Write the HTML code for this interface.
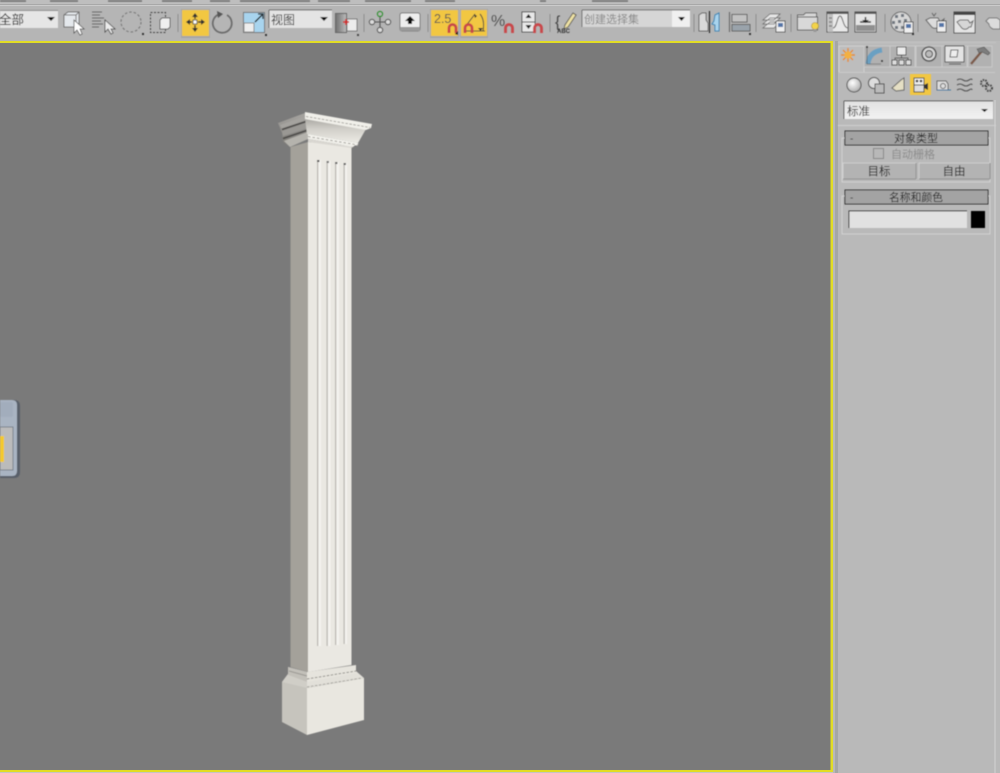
<!DOCTYPE html>
<html lang="zh">
<head>
<meta charset="utf-8">
<title>3ds Max</title>
<style>
html,body{margin:0;padding:0;background:#b5b5b5}
body{width:1000px;height:773px;overflow:hidden;position:relative}
svg{position:absolute;left:0;top:0;display:block}
text{font-family:"Liberation Sans","Noto Sans CJK SC",sans-serif}
</style>
</head>
<body>
<svg width="1000" height="773" viewBox="0 0 1000 773" xmlns="http://www.w3.org/2000/svg">
<defs>
<linearGradient id="fld" x1="0" y1="0" x2="0" y2="1"><stop offset="0" stop-color="#e2e2e2"/><stop offset="1" stop-color="#f2f2f2"/></linearGradient>
<linearGradient id="crown" x1="0" y1="0" x2="0" y2="1"><stop offset="0" stop-color="#a8a6a1"/><stop offset=".45" stop-color="#d2d0ca"/><stop offset="1" stop-color="#ecebe5"/></linearGradient>
<linearGradient id="band" x1="0" y1="0" x2="0" y2="1"><stop offset="0" stop-color="#a7a5a1"/><stop offset="1" stop-color="#7c7a76"/></linearGradient>
<radialGradient id="sph" cx=".4" cy=".35" r=".7"><stop offset="0" stop-color="#fff"/><stop offset="1" stop-color="#aaa"/></radialGradient>
<linearGradient id="piv" x1="0" y1="0" x2="1" y2="0"><stop offset="0" stop-color="#6f6f6f"/><stop offset="1" stop-color="#bdbdbd"/></linearGradient>
<filter id="b"><feGaussianBlur stdDeviation=".45"/></filter>
<filter id="b2"><feGaussianBlur stdDeviation=".7"/></filter>
</defs>

<rect width="1000" height="773" fill="#b5b5b5"/>
<rect x="0" y="0" width="1000" height="4" fill="#bebebe"/>
<g fill="#7d7d7d" filter="url(#b)">
<rect x="0" y="0" width="26" height="2"/><rect x="50" y="0" width="28" height="2"/><rect x="108" y="0" width="34" height="2"/><rect x="162" y="0" width="30" height="2"/><rect x="210" y="0" width="20" height="2"/><rect x="240" y="0" width="70" height="2"/><rect x="318" y="0" width="32" height="2"/><rect x="365" y="0" width="46" height="2"/><rect x="425" y="0" width="30" height="2"/><rect x="540" y="0" width="6" height="2"/><rect x="592" y="0" width="36" height="2"/>
</g>
<rect x="0" y="4" width="1000" height="1" fill="#a8a8a8"/>
<rect x="0" y="5" width="1000" height="1" fill="#cbcbcb"/>

<!-- viewport -->
<rect x="0" y="41" width="833" height="732" fill="#e2dd24"/>
<rect x="0" y="43" width="830.500" height="727" fill="#7a7a7a"/>
<rect x="833" y="41" width="167" height="732" fill="#b9b9b9"/>
<rect x="835" y="41" width="3" height="732" fill="#a5a7a5"/>
<rect x="994" y="100" width="2" height="673" fill="#c6c6c6"/>
<rect x="0" y="772" width="833" height="1" fill="#c5c5c5"/>

<g filter="url(#b)">
<rect x="0" y="10" width="58" height="18" fill="#e6e6e6"/>
<rect x="0" y="10" width="58" height="1" fill="#8a8a8a"/>
<path d="M47 17h8l-4 4z" fill="#111"/>
<text x="-1" y="24" font-size="12.500" fill="#222">全部</text>

<!-- select object -->
<path d="M64 15l4-3h11v12l-3 3H64z" fill="#e4e8ec" stroke="#6f6f6f"/>
<path d="M64 15h12v12M76 15l3-3" fill="none" stroke="#777"/>
<path d="M74 20v13l3-3 3 5 2-1-2-5h4z" fill="#fff" stroke="#555" stroke-width=".8"/>

<!-- select by name -->
<path d="M92 12h10M92 15h8M92 18h12M92 21h9M92 24h11M92 27h7" stroke="#6a6a6a" stroke-width="1"/>
<path d="M105 20v12l3-3 3 5 2-1-2-4h4z" fill="#ececec" stroke="#444" stroke-width=".8"/>

<circle cx="131" cy="22" r="10" fill="none" stroke="#777" stroke-width="1.100" stroke-dasharray="2.500 2"/>
<rect x="142" y="33" width="2" height="2" fill="#333"/>

<rect x="150.500" y="12.500" width="15" height="20" fill="none" stroke="#444" stroke-dasharray="2 1.500"/>
<path d="M160 20l2-2h8v9l-2 2h-8z" fill="#efefef" stroke="#666"/>
<path d="M178 14v18" stroke="#8e8e8e"/>

<!-- move active -->
<rect x="181" y="9" width="29" height="29" fill="#a4a4a4"/>
<rect x="182" y="10" width="27" height="26" fill="#f2c743"/>
<rect x="193" y="20" width="4" height="4" fill="#fff" stroke="#333" stroke-width=".8"/>
<path d="M195 13l3 4h-6zM195 32l-3-4h6zM186 22l4-3v6zM205 22l-4-3v6z" fill="#333"/>
<path d="M195 17v2M195 25v3M190 22h2M198 22h3" stroke="#333" stroke-width="1.400"/>

<!-- rotate -->
<path d="M220 14a9.500 9.500 0 1 0 7 1" fill="none" stroke="#6b6b6b" stroke-width="1.700"/>
<path d="M217 11l6 3-5 4z" fill="#555"/>

<!-- scale -->
<rect x="243.500" y="12.500" width="21" height="20" fill="#a8d4ee" stroke="#777"/>
<rect x="244" y="23" width="10" height="9" fill="#eee" stroke="#888"/>
<path d="M255 22l7-7M258 14h5v5" stroke="#111" stroke-width="1.300" fill="none"/>
<rect x="265" y="34" width="2" height="2" fill="#333"/>

<rect x="269" y="10" width="63" height="18" fill="#e4e4e4"/>
<path d="M269 10h63M269 10v18" stroke="#666" fill="none"/>
<path d="M320 17h8l-4 4z" fill="#111"/>
<text x="271" y="24" font-size="12" fill="#333">视图</text>

<!-- pivot -->
<rect x="335.500" y="13.500" width="11" height="19" fill="url(#piv)" stroke="#666"/>
<rect x="347" y="19" width="10" height="12" fill="#ececec" stroke="#777"/>
<path d="M346 19v6M343 22h6" stroke="#d32020" stroke-width="1.500"/>
<rect x="357" y="34" width="2" height="2" fill="#444"/>
<path d="M364 14v18" stroke="#8e8e8e"/>

<g fill="none" stroke="#555" stroke-width="1.100">
<path d="M380 17v13M373 22h14"/>
<circle cx="380" cy="14" r="2.600" stroke="#2d8f2d"/>
<circle cx="372" cy="22" r="2.600" fill="#ddd"/>
<circle cx="388" cy="22" r="2.600" fill="#ddd"/>
<circle cx="380" cy="30" r="2.600" fill="#ddd"/>
</g>
<rect x="400" y="13" width="20" height="18" rx="2" fill="#ededed" stroke="#777"/>
<rect x="400" y="27" width="20" height="4" rx="1" fill="#999"/>
<path d="M410 16l5 5h-3v3h-4v-3h-3z" fill="#111"/>
<path d="M428 14v18" stroke="#8e8e8e"/>

<!-- snaps -->
<rect x="430" y="9" width="29" height="29" fill="#a5a5a5"/>
<rect x="431" y="10" width="27" height="26" fill="#f2c743"/>
<text x="434" y="23" font-size="12.500" fill="#555">2.5</text>
<rect x="460" y="9" width="28" height="29" fill="#a5a5a5"/>
<rect x="461" y="10" width="26" height="26" fill="#f2c743"/>
<path d="M465 27l10-13M466 31h19M480 14q5 6 3 17" fill="none" stroke="#444"/>
<path d="M478 28h5l-2.500 3z" fill="#333"/>
<path d="M474 14l3 2-2 2z" fill="#333"/>
<text x="491" y="26" font-size="16" fill="#555">%</text>
<path d="M522 12h13v20h-13z" fill="#e8e8e8" stroke="#555"/>
<path d="M522 22h13" stroke="#444"/>
<path d="M528.500 14l3 4h-6zM528.500 29l-3-4h6z" fill="#222"/>
<g fill="none" stroke="#c9474a" stroke-width="2.800">
<path d="M449 33v-5a3.500 3.500 0 0 1 7 0v5"/>
<path d="M465 33v-5a3.500 3.500 0 0 1 7 0v5"/>
<path d="M505.500 33v-5a3.500 3.500 0 0 1 7 0v5"/>
<path d="M534.500 33v-5a3.500 3.500 0 0 1 7 0v5"/>
</g>
<path d="M458 35l-3-1 3-3z" fill="#111"/>
<path d="M550 14v18" stroke="#8e8e8e"/>

<!-- named sets -->
<text x="555" y="27" font-size="16" fill="#444">{</text>
<path d="M565 25l8-12 3 2-8 12-4 2z" fill="#efe2a4" stroke="#444" stroke-width=".8"/>
<text x="557" y="33" font-size="6" fill="#333" font-weight="bold">ABC</text>
<rect x="582" y="10" width="108" height="17" fill="#d6d6d6"/>
<rect x="672" y="10" width="18" height="17" fill="#f0f0f0"/>
<path d="M582 10h108M582 10v17" stroke="#6d6d6d" fill="none"/>
<path d="M678 17h7l-3.500 4z" fill="#111"/>
<text x="584" y="23" font-size="11" fill="#888">创建选择集</text>
<path d="M694 14v18" stroke="#8e8e8e"/>

<!-- mirror -->
<path d="M699 15l3-2h4v7l2 3v8h-9z" fill="#d9d9d9" stroke="#666"/>
<path d="M709.500 11v22" stroke="#222" stroke-width="1.100"/>
<path d="M719 13l-4 2-1 6-2 3 3 1v6h4z" fill="#a8d4ee" stroke="#3f85b5"/>
<!-- align -->
<path d="M729.500 12v20" stroke="#666" stroke-width="1.100"/>
<rect x="732" y="14.500" width="15" height="7.500" fill="#c2c2c2" stroke="#666"/>
<rect x="732" y="24.500" width="18" height="6.500" fill="#9aa3ab" stroke="#666"/>
<rect x="749" y="33" width="2" height="2" fill="#333"/>
<path d="M756 14v18" stroke="#8e8e8e"/>

<!-- layers -->
<path d="M763 24l7-6h10l-6 6zM763 20l7-6h10l-6 6zM763 28l7-6h10l-6 6z" fill="#e6e6e6" stroke="#666" stroke-width=".8"/>
<rect x="776" y="21" width="9" height="11" fill="#efefef" stroke="#444" stroke-width=".8"/>
<rect x="778" y="23" width="5" height="4" fill="#5274a8"/>
<path d="M791 14v18" stroke="#8e8e8e"/>

<!-- scene explorer -->
<path d="M797.500 15h6l2-2h11v4h1v13h-20z" fill="#d8d8d8" stroke="#666"/>
<path d="M798 17h19" stroke="#555"/>
<circle cx="815" cy="26" r="3.500" fill="#f2d34b" stroke="#a68d20" stroke-width=".6"/>
<rect x="813.500" y="29" width="3" height="3" fill="#999"/>
<!-- curve editor -->
<rect x="827" y="12" width="21" height="20" fill="#e9e9e9" stroke="#555"/>
<rect x="827" y="12" width="21" height="2" fill="#555"/>
<rect x="828" y="14" width="5" height="18" fill="#bfbfbf"/>
<path d="M829 18h3M829 22h3M829 26h3" stroke="#666"/>
<path d="M833 28c4 0 4-12 7-12s3 12 8 12" fill="none" stroke="#666"/>
<!-- schematic / dope -->
<rect x="855" y="12" width="21" height="20" fill="#e5e5e5" stroke="#555"/>
<rect x="855" y="12" width="21" height="2" fill="#555"/>
<rect x="856" y="25" width="19" height="6" fill="#8f8f8f"/>
<path d="M860 22h11" stroke="#222" stroke-width="1.400"/>
<path d="M865.500 17v4" stroke="#222" stroke-width="1.400"/>
<path d="M862 20h7l-3.500 3z" fill="#222"/>
<path d="M885 14v18" stroke="#8e8e8e"/>

<!-- material -->
<circle cx="901" cy="22" r="10" fill="#d6d6d6" stroke="#666"/>
<g fill="#6f7780"><rect x="895" y="15" width="3" height="3"/><rect x="901" y="14" width="3" height="3"/><rect x="892" y="21" width="3" height="3"/><rect x="898" y="20" width="3" height="3"/><rect x="904" y="19" width="3" height="3"/><rect x="895" y="26" width="3" height="3"/><rect x="901" y="26" width="3" height="3"/></g>
<rect x="904" y="22" width="9" height="11" fill="#efefef" stroke="#444" stroke-width=".8"/>
<rect x="906" y="24" width="5" height="4" fill="#5274a8"/>
<rect x="912" y="33" width="2" height="2" fill="#333"/>
<path d="M918 14v18" stroke="#8e8e8e"/>

<!-- render setup teapot -->
<path d="M930 18h8l2 4 4-3-2 7h-3c-2 3-6 3-8 0l-5-6z" fill="#dcdcdc" stroke="#666"/>
<path d="M932 13l2 3 2-3" stroke="#666" fill="none"/>
<rect x="937" y="21" width="9" height="11" fill="#efefef" stroke="#444" stroke-width=".8"/>
<rect x="939" y="23" width="5" height="4" fill="#5274a8"/>
<!-- rendered frame -->
<rect x="954" y="12" width="21" height="21" fill="#e4e4e4" stroke="#555"/>
<rect x="954" y="12" width="21" height="3" fill="#444"/>
<path d="M960 20h8l2 3 3-2-2 6h-2c-2 3-6 3-8 0l-4-5z" fill="#d6d6d6" stroke="#666"/>
<!-- render -->
<path d="M989 18h8l3 2v9h-7c-2-1-4-3-4-5l-3-3z" fill="#dcdcdc" stroke="#777"/>
</g>

<!-- left floating panel -->
<g filter="url(#b)">
<path d="M0 400h14q6 0 6 6v66q0 6-6 6H0z" fill="#585f69"/>
<path d="M0 400h12q5 0 5 5v66q0 5-5 5H0z" fill="#a9b4c2"/>
<rect x="0" y="402" width="13" height="15" rx="2" fill="#a2adbc"/>
<rect x="0" y="427" width="13" height="43" fill="#bbb"/>
<rect x="0" y="427" width="13" height="43" fill="none" stroke="#7b838d"/>
<rect x="0" y="436" width="4" height="26" fill="#f3c92f"/>
</g>

<!-- column -->
<g filter="url(#b)">
<polygon points="282,682 307,688 307,735 282,722" fill="#c6c4bd"/>
<polygon points="307,688 364,678 364,720 307,735" fill="#e9e7e0"/>
<polygon points="282,682 288,674 307,680 356,671 364,678 307,688" fill="#e2e0d9"/>
<polygon points="282,682 288,674 307,680 307,688" fill="#d0cec7"/>
<polygon points="288,667 307,672 356,665 356,673 307,682 288,675" fill="#e6e4dd"/>
<polygon points="288,667 307,672 307,682 288,675" fill="#c2c0b9"/>
<path d="M307 679l49-8" stroke="#8a8883" stroke-width=".9" stroke-dasharray="2.500 1.500"/>
<path d="M289 671l18 5" stroke="#9a9893" stroke-width="1"/>
<path d="M307 687l55-9" stroke="#a3a19b" stroke-width=".9" stroke-dasharray="2.500 1.500"/>
<!-- shaft -->
<polygon points="290.500,147 308,142 308,672 290.500,667" fill="#a4a19a"/>
<polygon points="308,142 351.500,146 351.500,665 308,672" fill="#eae8e2"/>
<g>
<rect x="317" y="160" width="4" height="486" fill="#f4f3ef"/><rect x="317" y="160" width="1.300" height="486" fill="#b9b7b1"/>
<rect x="326.500" y="161" width="4" height="485" fill="#f4f3ef"/><rect x="326.500" y="161" width="1.300" height="485" fill="#b9b7b1"/>
<rect x="335" y="162" width="4" height="483" fill="#f4f3ef"/><rect x="335" y="162" width="1.300" height="483" fill="#b9b7b1"/>
<rect x="343.500" y="163" width="3.500" height="481" fill="#f4f3ef"/><rect x="343.500" y="163" width="1.300" height="481" fill="#b9b7b1"/>
</g>
<rect x="317" y="160" width="2.500" height="2" fill="#555"/><rect x="326.500" y="161" width="2.500" height="2" fill="#777"/><rect x="335" y="162" width="2.500" height="2" fill="#666"/><rect x="343.500" y="163" width="2.500" height="2" fill="#666"/>
<!-- cap left -->
<polygon points="278,123 305,113 308,139 290,147 283,142 282,133" fill="url(#band)"/>
<polygon points="280,125 305,116 305,121 282,129" fill="#a5a39f"/>
<path d="M282 129.500l24-8" stroke="#4f4e4b" stroke-width="1.800"/>
<path d="M283 138.500l25-8.500" stroke="#4f4e4b" stroke-width="1.800"/>
<polygon points="282,131 306,123 307,128 283,136" fill="#9a9894"/>
<polygon points="284,141 308,132 308,139 290,147" fill="#b5b3ad"/>
<!-- neck front -->
<polygon points="308,134 358,143 353,147 308,139" fill="#efeee8"/>
<!-- crown front -->
<polygon points="305,118 366,129 358,143 307,134" fill="url(#crown)"/>
<polygon points="305,112 372,124 371,128 366,130 305,119" fill="#f1f0ea"/>
<path d="M306 116.500l64 11" stroke="#a09e99" stroke-width=".9" stroke-dasharray="2.500 1.500"/>
<path d="M308 136l50 8.500" stroke="#f5f4ef" stroke-width="2.600"/>
<path d="M308 136.500l50 8.500" stroke="#8d8b85" stroke-width=".8" stroke-dasharray="2.500 2"/>
<polygon points="308,139 353,147 351.500,148 308,142" fill="#d9d7d1"/>
</g>

<!-- command panel tabs -->
<g filter="url(#b)">
<rect x="838" y="42" width="158" height="1" fill="#c4c4c4"/>
<rect x="839" y="46" width="25" height="26" fill="#bdbdbd"/>
<path d="M839 72V46h25v26" fill="none" stroke="#d2d2d2"/>
<path d="M864 46h26v21h-26zM890 46h25v21h-25zM916 46h26v21h-26zM942 46h25v21h-25zM968 46h24v21h-24z" fill="#b1b1b1" stroke="#c9c9c9"/>
<g stroke="#e68a22" stroke-width="1.400"><path d="M848 48v14M841 55h14M843 50l10 10M853 50l-10 10"/></g>
<circle cx="848" cy="55" r="3.800" fill="#f3b042"/>
<path d="M868 64q1-12 14-14" fill="none" stroke="#6aa0c2" stroke-width="5"/>
<path d="M867 47v17h14" fill="none" stroke="#555" stroke-width=".6"/>
<rect x="866" y="46" width="2" height="2" fill="#333"/><rect x="881" y="60" width="2" height="2" fill="#333"/>
<rect x="897" y="47" width="9" height="8" fill="#ececec" stroke="#555"/>
<path d="M901.500 55v3M895 60v-2h13v2" fill="none" stroke="#555"/>
<rect x="892" y="60" width="5" height="5" fill="#ddd" stroke="#555"/><rect x="899" y="60" width="5" height="5" fill="#ddd" stroke="#555"/><rect x="906" y="60" width="5" height="5" fill="#ddd" stroke="#555"/>
<circle cx="929" cy="54" r="7" fill="#d8d8d8" stroke="#555" stroke-width="1.500"/><circle cx="929" cy="54" r="3.500" fill="#bbb" stroke="#444"/>
<rect x="945" y="46" width="19" height="16" fill="#e3e3e3" stroke="#555"/>
<path d="M951 50h7l-1 7h-7z" fill="#eee" stroke="#666"/>
<path d="M949 64h12" stroke="#555"/>
<path d="M971 64l11-13" stroke="#7c5a48" stroke-width="2.500"/>
<path d="M977 49l7-2 6 6-2 2-6-3-3 1z" fill="#7d7d7d" stroke="#555" stroke-width=".6"/>
<rect x="839" y="72" width="156" height="1" fill="#c9c9c9"/>

<circle cx="854" cy="85" r="7" fill="url(#sph)" stroke="#555"/>
<circle cx="874" cy="83" r="5.500" fill="#ddd" stroke="#555"/>
<rect x="875" y="84" width="9" height="9" fill="#bbb" stroke="#555"/>
<path d="M892 88l9-8 3-2v12l-8 1z" fill="#e5dfc4" stroke="#666"/>
<rect x="910" y="74" width="21" height="21" fill="#f2c743"/>
<rect x="914" y="78" width="10" height="7" fill="#eee" stroke="#444"/>
<rect x="914" y="85" width="10" height="7" fill="#ddd" stroke="#444"/>
<circle cx="917" cy="81" r="1.300" fill="#333"/><circle cx="921" cy="81" r="1.300" fill="#333"/>
<path d="M924 85l4-2v7l-4-2z" fill="#333"/>
<path d="M937 81h9l2 3v6h-11z" fill="#ddd" stroke="#666"/>
<path d="M937 90h14" stroke="#4578a0"/>
<circle cx="943" cy="86" r="2.500" fill="none" stroke="#666"/>
<path d="M957 80q3-2 6 0t6 0q3-2 3 0M957 85q3-2 6 0t6 0q3-2 3 0M957 90q3-2 6 0t6 0q3-2 3 0" fill="none" stroke="#555" stroke-width="1.100"/>
<circle cx="984" cy="83" r="3" fill="none" stroke="#444" stroke-width="2" stroke-dasharray="1.500 1"/>
<circle cx="989" cy="88" r="3" fill="none" stroke="#444" stroke-width="2" stroke-dasharray="1.500 1"/>

<rect x="844" y="101" width="149" height="18" fill="url(#fld)"/>
<path d="M844 101h149M844 101v18" stroke="#555" fill="none"/>
<path d="M981 109h7l-3.500 3z" fill="#111"/>
<text x="847" y="115" font-size="11.500" fill="#333">标准</text>

<rect x="838" y="125" width="158" height="1" fill="#cfcfcf"/>
<rect x="842" y="138" width="148" height="44" fill="none" stroke="#d2d2d2"/>
<rect x="845" y="131" width="143" height="14" fill="#a3a3a3" stroke="#2e2e2e"/>
<text x="850" y="142" font-size="10" fill="#222">-</text>
<text x="916" y="142" font-size="11" fill="#222" text-anchor="middle">对象类型</text>
<rect x="873.500" y="148.500" width="10" height="10" fill="#b8b8b8" stroke="#8a8a8a"/>
<text x="891" y="158" font-size="11" fill="#8d8d8d">自动栅格</text>
<rect x="843" y="163" width="73" height="16" fill="#b3b3b3" stroke="#cfcfcf"/>
<rect x="919" y="163" width="71" height="16" fill="#b3b3b3" stroke="#cfcfcf"/>
<path d="M916 163v16M990 163v16M843 179h73M919 179h71" stroke="#929292" fill="none"/>
<text x="879" y="175" font-size="11.500" fill="#222" text-anchor="middle">目标</text>
<text x="954" y="175" font-size="11.500" fill="#222" text-anchor="middle">自由</text>

<rect x="842" y="196" width="148" height="38" fill="none" stroke="#d2d2d2"/>
<rect x="845" y="190" width="143" height="14" fill="#a3a3a3" stroke="#2e2e2e"/>
<text x="850" y="201" font-size="10" fill="#222">-</text>
<text x="916" y="201" font-size="10.800" fill="#222" text-anchor="middle">名称和颜色</text>
<rect x="849" y="211" width="118" height="17" fill="#e1e1e1"/>
<path d="M849 228v-17h118" stroke="#333" fill="none"/>
<rect x="971" y="211" width="14" height="17" fill="#000"/>
</g>
</svg>
</body>
</html>
